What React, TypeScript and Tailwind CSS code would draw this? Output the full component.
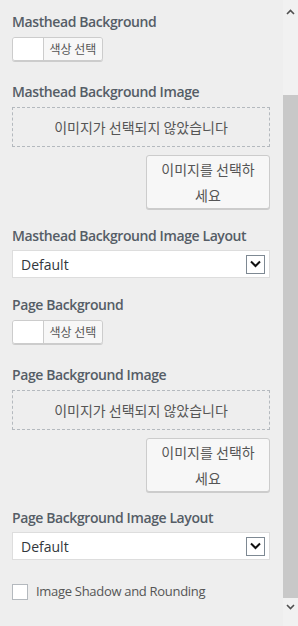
const font = { fontFamily: '"Open Sans", "Noto Sans CJK KR", sans-serif' };
const ko = { fontFamily: '"Noto Sans CJK KR", sans-serif' };

function Label({ children }: { children: React.ReactNode }) {
  return (
    <div className="text-[14px] leading-[20px] font-semibold tracking-[-0.4px] text-[#555d66]">
      {children}
    </div>
  );
}

function ColorPicker() {
  return (
    <div className="mt-[5px] flex h-[24px] w-[91px] overflow-hidden rounded-[3px] border border-[#ccc] shadow-[0_1px_0_#ccc]">
      <span className="w-[30px] bg-white" />
      <span
        className="flex flex-1 items-center justify-center border-l border-[#ccc] bg-[#f7f7f7] text-[12px] text-[#555]"
        style={ko}
      >
        색상 선택
      </span>
    </div>
  );
}

function ImagePicker() {
  return (
    <>
      <div
        className="mt-[5px] flex h-[40px] items-center justify-center border border-dashed border-[#b4b9be] text-[14px] text-[#555]"
        style={ko}
      >
        이미지가 선택되지 않았습니다
      </div>
      <div className="mt-[8px] flex justify-end">
        <button
          className="w-[124px] rounded-[3px] border border-[#ccc] bg-[#f7f7f7] px-[10px] text-[14px] leading-[26px] text-[#555] shadow-[0_1px_0_#ccc]"
          style={ko}
        >
          이미지를 선택하세요
        </button>
      </div>
    </>
  );
}

function Select() {
  return (
    <div className="mt-[4px] flex h-[28px] items-center justify-between border border-[#ddd] bg-white pl-[8px] pr-[4px] text-[14px] text-[#32373c]">
      <span>Default</span>
      <span className="flex h-[19px] w-[19px] items-center justify-center border border-[#7e8993] bg-white">
        <svg width="11" height="8" viewBox="0 0 11 8">
          <path d="M1 1.5l4.5 4.5L10 1.5" fill="none" stroke="#111" strokeWidth="2" />
        </svg>
      </span>
    </div>
  );
}

export default function App() {
  return (
    <div className="flex h-[626px] w-[298px] overflow-hidden bg-[#eee]" style={font}>
      <div className="flex-1 pl-[12px] pr-[13px] pt-[12px]">
        <Label>Masthead Background</Label>
        <ColorPicker />

        <div className="mt-[21px]">
          <Label>Masthead Background Image</Label>
          <ImagePicker />
        </div>

        <div className="mt-[17px]">
          <Label>Masthead Background Image Layout</Label>
          <Select />
        </div>

        <div className="mt-[17px]">
          <Label>Page Background</Label>
          <ColorPicker />
        </div>

        <div className="mt-[21px]">
          <Label>Page Background Image</Label>
          <ImagePicker />
        </div>

        <div className="mt-[16px]">
          <Label>Page Background Image Layout</Label>
          <Select />
        </div>

        <label className="mt-[22px] flex items-center gap-[8px] text-[13px] tracking-[-0.3px] text-[#555]">
          <span className="h-[16px] w-[16px] border border-[#b4b9be] bg-white" />
          Image Shadow and Rounding
        </label>
      </div>

      <div className="flex w-[15px] flex-col items-center bg-[#f1f1f1]">
        <div className="flex h-[17px] w-full items-end justify-center pb-[2px]">
          <svg width="9" height="6" viewBox="0 0 9 6">
            <path d="M1 5l3.5-3.5L8 5" fill="none" stroke="#505050" strokeWidth="1.6" />
          </svg>
        </div>
        <div className="mt-[78px] h-[503px] w-full bg-[#c8c8c8]" />
        <div className="flex h-[17px] w-full items-center justify-center">
          <svg width="9" height="6" viewBox="0 0 9 6">
            <path d="M1 1l3.5 3.5L8 1" fill="none" stroke="#505050" strokeWidth="1.6" />
          </svg>
        </div>
      </div>
    </div>
  );
}
